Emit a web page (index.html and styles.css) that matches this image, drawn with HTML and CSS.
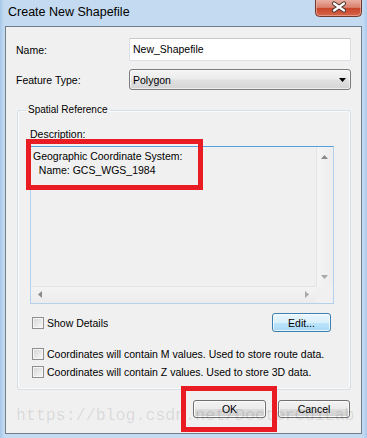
FILE: index.html
```html
<!DOCTYPE html>
<html>
<head>
<meta charset="utf-8">
<title>Create New Shapefile</title>
<link rel="stylesheet" href="styles.css">
</head>
<body>
<div class="window">
  <div class="titlebar">
    <span class="title">Create New Shapefile</span>
    <div class="close">
      <svg width="47" height="17" viewBox="0 0 47 17">
        <defs>
          <linearGradient id="cg" x1="0" y1="0" x2="0" y2="1">
            <stop offset="0" stop-color="#eab0a2"/>
            <stop offset="0.45" stop-color="#d9806c"/>
            <stop offset="0.5" stop-color="#c8452a"/>
            <stop offset="1" stop-color="#d8674c"/>
          </linearGradient>
        </defs>
        <path d="M0.5 0 V12.5 Q0.5 16.5 4.5 16.5 H42.5 Q46.5 16.5 46.5 12.5 V0" fill="url(#cg)" stroke="#6e3a30" stroke-width="1"/>
        <path d="M1.5 0 V12.3 Q1.5 15.5 4.7 15.5 H42.3 Q45.5 15.5 45.5 12.3 V0" fill="none" stroke="#f0b9ab" stroke-opacity="0.6" stroke-width="1"/>
        <path d="M19 3.5 L29 10.5 M29 3.5 L19 10.5" stroke="#47352f" stroke-width="4.2" stroke-linecap="round"/>
        <path d="M19 3.5 L29 10.5 M29 3.5 L19 10.5" stroke="#ffffff" stroke-width="2.2" stroke-linecap="round"/>
      </svg>
    </div>
  </div>
  <div class="client">
    <div class="row">
      <span class="lbl">Name:</span>
      <div class="input">New_Shapefile</div>
    </div>
    <div class="row row-type">
      <span class="lbl">Feature Type:</span>
      <div class="select">
        <span>Polygon</span>
        <svg class="drop" width="7" height="4" viewBox="0 0 7 4"><path d="M0 0 H7 L3.5 4 Z" fill="#000"/></svg>
      </div>
    </div>
    <fieldset class="group">
      <legend>Spatial Reference</legend>
      <div class="group-inner">
        <div class="desc-label">Description:</div>
        <div class="textarea">
          <div class="ta-text">Geographic Coordinate System:
  Name: GCS_WGS_1984</div>
          <div class="vscroll">
            <svg width="7" height="4" viewBox="0 0 7 4"><path d="M3.5 0 L7 4 H0 Z" fill="#8a8a8a"/></svg>
            <svg width="7" height="4" viewBox="0 0 7 4"><path d="M0 0 H7 L3.5 4 Z" fill="#a8a8a8"/></svg>
          </div>
          <div class="hscroll">
            <svg width="4" height="7" viewBox="0 0 4 7"><path d="M0 3.5 L4 0 V7 Z" fill="#8a8a8a"/></svg>
            <svg width="4" height="7" viewBox="0 0 4 7"><path d="M4 3.5 L0 0 V7 Z" fill="#a8a8a8"/></svg>
          </div>
          <div class="corner"></div>
        </div>
        <div class="details-row">
          <label class="check"><span class="box"></span>Show Details</label>
          <button class="btn btn-edit">Edit...</button>
        </div>
        <label class="check check-m"><span class="box"></span>Coordinates will contain M values. Used to store route data.</label>
        <label class="check check-z"><span class="box"></span>Coordinates will contain Z values. Used to store 3D data.</label>
      </div>
    </fieldset>
    <div class="buttons">
      <button class="btn btn-ok">OK</button>
      <button class="btn btn-cancel">Cancel</button>
    </div>
  </div>
  <div class="watermark">https://blog.csdn.net/DoctorCuiLab</div>
  <div class="anno anno-desc"></div>
  <div class="anno anno-ok"></div>
</div>
</body>
</html>
```
FILE: styles.css
```css
* { box-sizing: border-box; }
html, body { margin: 0; padding: 0; }
body {
  width: 367px;
  height: 438px;
  overflow: hidden;
  font-family: "Liberation Sans", Arial, sans-serif;
  font-size: 10.5px;
  color: #000;
}
.window {
  position: relative;
  width: 367px;
  height: 438px;
  display: flex;
  flex-direction: column;
  padding: 0 5px 4px 5px;
  background: linear-gradient(to right, #a6c7ea 0, #c4daf1 4px, #c4daf1 363px, #a9cbef 367px);
}
.titlebar {
  height: 26px;
  flex: none;
  display: flex;
  justify-content: space-between;
  align-items: flex-start;
}
.title {
  padding: 5px 0 0 3px;
  font-size: 12.5px;
  line-height: 14px;
  color: #000;
}
.close { width: 47px; height: 17px; }
.close svg { display: block; }
.client {
  flex: 1;
  border: 1px solid #6f7d8c;
  background: #f0f0f0;
  display: flex;
  flex-direction: column;
  padding-top: 11px;
}
.row {
  display: grid;
  grid-template-columns: 113px 222px;
  align-items: center;
  padding-left: 10px;
}
.row-type { margin-top: 8px; }
.lbl { line-height: 14px; }
.input {
  height: 23px;
  border: 1px solid #dcdfe4;
  border-top-color: #c8cbd0;
  background: #fff;
  padding-left: 3px;
  line-height: 21px;
}
.select {
  height: 21px;
  border: 1px solid #7c7c7c;
  border-radius: 3px;
  background: linear-gradient(#f4f4f4, #ececec 45%, #e0e0e0 55%, #d4d4d4);
  box-shadow: inset 0 0 0 1px rgba(255,255,255,0.6);
  display: flex;
  align-items: center;
  justify-content: space-between;
  padding: 0 4px 0 3px;
}
.drop { display: block; }
.group {
  margin: 13px 10px 0 11px;
  padding: 0;
  border: 1px solid #d5dfe5;
  border-radius: 3px;
  min-width: 0;
  box-shadow: inset 0 0 0 1px #fafafa;
}
.group legend {
  margin-left: 8px;
  padding: 0 2px;
  font-size: 10px;
  line-height: 14px;
}
.group-inner { padding: 10px 0 10px 12px; }
.desc-label { line-height: 14px; }
.textarea {
  margin-top: 5px;
  width: 304px;
  height: 158px;
  border: 1px solid #b3d1ee;
  border-top-color: #5a9ddc;
  background: #f0f0f0;
  display: grid;
  grid-template-columns: 1fr 17px;
  grid-template-rows: 1fr 17px;
}
.ta-text {
  padding: 2px 0 0 2px;
  line-height: 14px;
  white-space: pre;
}
.vscroll {
  background: linear-gradient(to right, #e4e4e4 0 1px, #f4f4f4 1px, #ededed);
  display: flex;
  flex-direction: column;
  align-items: center;
  justify-content: space-between;
  padding: 8px 0 7px 0;
}
.vscroll svg, .hscroll svg { display: block; }
.hscroll {
  background: linear-gradient(to bottom, #e3e3e3 0 1px, #f3f3f3 1px, #ebebeb);
  display: flex;
  align-items: center;
  justify-content: space-between;
  padding: 0 7px;
}
.corner { background: #f0f0f0; }
.details-row {
  margin-top: 9px;
  width: 304px;
  display: flex;
  justify-content: space-between;
  align-items: center;
  padding: 0 3px 0 2px;
}
.check {
  display: flex;
  align-items: center;
  line-height: 14px;
  padding-left: 0;
}
.check-m { margin: 15px 0 0 2px; }
.check-z { margin: 4px 0 0 2px; }
.box {
  width: 12px;
  height: 12px;
  margin-right: 3px;
  border: 1px solid #8f8f8f;
  background: linear-gradient(135deg, #d4d4d4, #f9f9f9);
  box-shadow: inset 0 0 0 1px #f6f6f6;
  flex: none;
}
.btn {
  font-family: inherit;
  font-size: 10.5px;
  color: #000;
  padding: 0;
  border: 1px solid #707070;
  border-radius: 3px;
  background: linear-gradient(#f2f2f2, #ebebeb 50%, #dddddd 50%, #cfcfcf);
  box-shadow: inset 0 0 0 1px #fbfbfb;
  line-height: 14px;
}
.btn-edit {
  width: 59px;
  height: 19px;
  border-color: #3c7fb1;
  background: linear-gradient(#eaf6fd, #d9f0fc 50%, #bee6fd 50%, #a7d9f5);
  box-shadow: inset 0 0 0 1px rgba(255,255,255,0.7);
}
.buttons {
  margin-top: 10px;
  display: flex;
  justify-content: flex-end;
  gap: 12px;
  padding-right: 11px;
}
.btn-ok { width: 73px; height: 18px; }
.btn-cancel { width: 72px; height: 18px; }
.watermark {
  position: absolute;
  left: 16px;
  top: 408px;
  font-family: "Liberation Mono", monospace;
  font-size: 16.6px;
  line-height: 1;
  color: rgba(0,0,0,0.11);
  white-space: nowrap;
  pointer-events: none;
}
.anno {
  position: absolute;
  border: 5px solid #e91c23;
  pointer-events: none;
}
.anno-desc { left: 26px; top: 139px; width: 177px; height: 51px; }
.anno-ok { left: 181px; top: 386px; width: 96px; height: 46px; }
```
